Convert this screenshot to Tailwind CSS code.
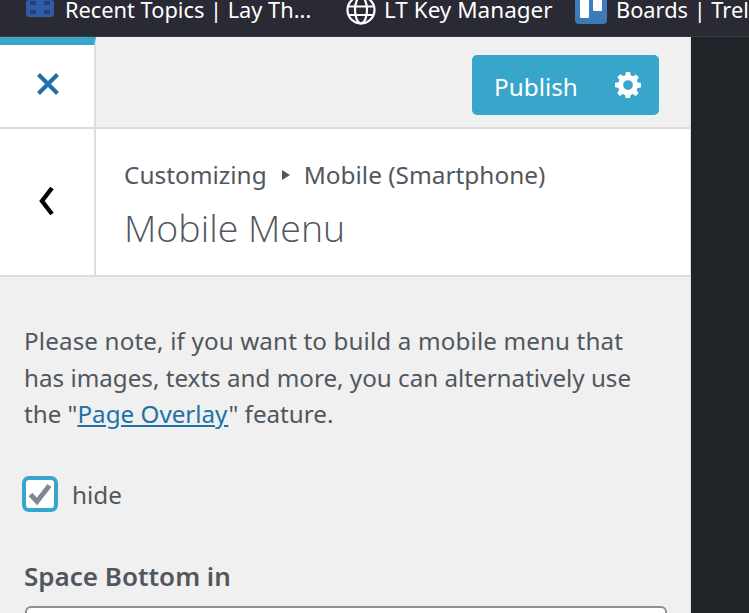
<!doctype html>
<html>
<head>
<meta charset="utf-8">
<script src="https://cdn.jsdelivr.net/npm/@tailwindcss/browser@4"></script>
</head>
<body class="w-[749px] h-[613px] overflow-hidden bg-[#1f2428] font-['Noto_Sans',sans-serif] text-[#50575e]">
<div class="h-[37px] bg-[#292a33] border-b border-[#3a3b42] flex items-start text-white text-[21.800px] leading-[22px] whitespace-nowrap overflow-hidden">
  <div class="ml-[25px] w-[30px] h-[17px] mr-[10px] shrink-0">
    <svg viewBox="0 0 30 17" class="w-full h-full"><rect x="1" y="0" width="28" height="17" rx="3" fill="#2e5ba8"/><rect x="5" y="1" width="6" height="4" fill="#24406f"/><rect x="19" y="1" width="6" height="4" fill="#24406f"/><rect x="5" y="10" width="6" height="4" fill="#24406f"/><rect x="19" y="10" width="6" height="4" fill="#24406f"/></svg>
  </div>
  <span class="w-[281px] -mt-[1px] shrink-0">Recent Topics | Lay Th...</span>
  <svg viewBox="0 0 30 30" class="w-[30px] h-[30px] -mt-[5px] mr-[8px] shrink-0" fill="none" stroke="#fff" stroke-width="2.2"><circle cx="15" cy="15" r="13.5"/><ellipse cx="15" cy="15" rx="6" ry="13.5"/><path d="M2 11.500h26M2 20h26"/></svg>
  <span class="w-[191px] -mt-[1px] text-[22.500px] shrink-0">LT Key Manager</span>
  <div class="w-[32px] h-[24px] mr-[9px] rounded-b-[4px] bg-gradient-to-b from-[#3f7dc4] to-[#3b78b4] flex gap-[4px] pl-[5px] shrink-0">
    <div class="w-[9px] h-[18px] bg-white rounded-b-[1px]"></div>
    <div class="w-[9px] h-[11px] bg-white rounded-b-[1px]"></div>
  </div>
  <span class="-mt-[1px]">Boards | Trello</span>
</div>
<div class="relative w-[691px] h-[576px] bg-[#f0f0f0] border-r border-[#dddddd] overflow-hidden">
  <header class="h-[92px] flex border-b-2 border-[#dddddd]">
    <div class="relative w-[96px] h-full bg-white border-r-2 border-[#dddddd] flex items-center justify-center">
      <div class="absolute left-0 top-0 w-[96px] h-[8px] bg-[#38a5cb] [clip-path:polygon(0_0,100%_0,98%_100%,0_100%)]"></div>
      <svg viewBox="0 0 24 24" class="w-[24px] h-[24px] ml-[1px] mt-[3px]" fill="none" stroke="#2271a6" stroke-width="4.2"><path d="M2.500 2.500l19 19M21.500 2.500l-19 19"/></svg>
    </div>
    <div class="flex-1 flex justify-end items-start pt-[18px] pr-[31px]">
      <div class="w-[187px] h-[60px] bg-[#38a5cb] rounded-[5px] text-white flex items-center">
        <span class="ml-[22px] w-[122px] mt-[4px] text-[24.300px] leading-none">Publish</span>
        <svg viewBox="0 0 24 24" class="w-[26px] h-[26px] -ml-[1px]" fill="#fff"><path fill-rule="evenodd" d="M10 0h4l.6 3.200 2 .8L19.300 2.200 22 4.900l-1.800 2.700.8 2 3 .6v4l-3.200.6-.8 2 1.800 2.700-2.700 2.700-2.700-1.800-2 .8-.6 3.200h-4l-.6-3.200-2-.8-2.700 1.800L2 19.300l1.800-2.700-.8-2L0 14v-4l3.200-.6.8-2L2.200 4.700 4.900 2l2.700 1.800 2-.8zM12 7.500a4.500 4.500 0 1 0 0 9 4.500 4.500 0 0 0 0-9z"/></svg>
      </div>
    </div>
  </header>
  <section class="h-[148px] bg-white flex border-b-2 border-[#dddddd]">
    <div class="w-[96px] h-full border-r-2 border-[#dddddd] flex items-center justify-center">
      <svg viewBox="0 0 16 30" class="w-[16px] h-[30px] -ml-[3px] -mt-[2px]" fill="none" stroke="#000" stroke-width="4.400"><path d="M14 2L4 15l10 13"/></svg>
    </div>
    <div class="pl-[28px] pt-[30px]">
      <div class="flex items-center text-[24.400px] leading-[32px] h-[32px]">
        <span>Customizing</span>
        <span class="w-0 h-0 ml-[15px] mr-[14px] border-y-[5px] border-y-transparent border-l-[8px] border-l-[#50575e]"></span>
        <span>Mobile (Smartphone)</span>
      </div>
      <div class="mt-[14px] text-[37.500px] leading-[46px] font-light font-['Open_Sans',sans-serif]">Mobile Menu</div>
    </div>
  </section>
  <main class="px-[24px] pt-[46px]">
    <p class="text-[24.200px] leading-[36.500px] w-[620px]"><span class="tracking-[0.14px]">Please note, if you want to build a mobile menu that</span> has images, texts and more, you can alternatively use the "<a class="underline text-[#2271a6]">Page Overlay</a>" feature.</p>
    <label class="-ml-[2px] mt-[43px] flex items-center h-[36px]">
      <span class="w-[36px] h-[36px] rounded-[7px] border-[4px] border-[#38a5cb] bg-white flex items-center justify-center shrink-0">
        <svg viewBox="0 0 24 24" class="w-[24px] h-[24px]" fill="none" stroke="#7e8993" stroke-width="5"><path d="M2.500 12.500l6.500 7L21.500 3.500"/></svg>
      </span>
      <span class="ml-[14px] mt-[3px] text-[24.300px] leading-none">hide</span>
    </label>
    <h3 class="mt-[46px] text-[26px] leading-[36px] font-semibold">Space Bottom in</h3>
    <div class="ml-[1px] mt-[12px] w-[642px] h-[40px] bg-white border-2 border-[#8c8f94] rounded-[6px]"></div>
  </main>
</div>
</body>
</html>
